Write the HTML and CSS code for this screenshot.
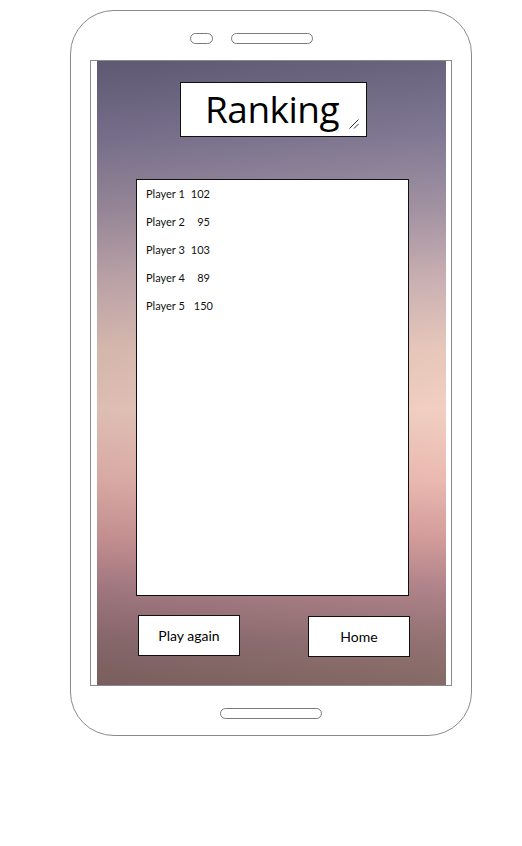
FILE: index.html
```html
<!DOCTYPE html>
<html>
<head>
<meta charset="utf-8">
<link rel="stylesheet" href="styles.css">
</head>
<body>
<div class="phone">
  <div class="speakers">
    <div class="pill small"></div>
    <div class="pill large"></div>
  </div>
  <div class="frame">
    <div class="screen">
      <div class="title">
        <span class="title-text">Ranking</span>
        <svg class="grip" width="10" height="10" viewBox="0 0 10 10">
          <line x1="0.5" y1="9.5" x2="9.5" y2="0.5" stroke="#333" stroke-width="1"/>
          <line x1="5" y1="9.5" x2="9.5" y2="5" stroke="#333" stroke-width="1"/>
        </svg>
      </div>
      <div class="list">
        <div class="row"><span class="name">Player 1</span><span class="score">102</span></div>
        <div class="row"><span class="name">Player 2</span><span class="score">95</span></div>
        <div class="row"><span class="name">Player 3</span><span class="score">103</span></div>
        <div class="row"><span class="name">Player 4</span><span class="score">89</span></div>
        <div class="row"><span class="name">Player 5</span><span class="score last">150</span></div>
      </div>
      <div class="buttons">
        <div class="btn">Play again</div>
        <div class="btn home">Home</div>
      </div>
    </div>
  </div>
  <div class="home-bar"></div>
</div>
</body>
</html>
```
FILE: styles.css
```css
html, body {
  margin: 0;
  padding: 0;
  background: #ffffff;
}
body {
  font-family: "Lato", "Noto Sans", sans-serif;
  color: #111;
}
.phone {
  box-sizing: border-box;
  margin: 10px 0 0 70px;
  width: 402px;
  height: 726px;
  border: 1px solid #8a8a8a;
  border-radius: 44px;
  display: flex;
  flex-direction: column;
}
.speakers {
  display: flex;
  gap: 18px;
  padding: 22px 0 0 119px;
  height: 11px;
}
.pill {
  box-sizing: border-box;
  height: 11px;
  border: 1px solid #7a7a7a;
  border-radius: 6px;
}
.pill.small { width: 23px; }
.pill.large { width: 82px; }
.frame {
  box-sizing: border-box;
  margin: 16px 0 0 19px;
  width: 362px;
  height: 626px;
  border: 1px solid #8a8a8a;
  padding: 0 5px 0 6px;
}
.screen {
  height: 100%;
  display: flex;
  flex-direction: column;
  background:
    linear-gradient(to right, rgba(50, 45, 70, 0.10), rgba(255, 255, 255, 0.04)),
    linear-gradient(to bottom,
      #635d78 0%,
      #7c7490 12%,
      #a08f9f 24%,
      #c8adb0 35%,
      #e6c5b8 46%,
      #f1cdbf 56%,
      #eab7ae 67%,
      #d39a98 76%,
      #aa7d84 85%,
      #8e6c6d 93%,
      #80645f 100%);
}
.title {
  position: relative;
  box-sizing: border-box;
  margin: 21px 0 0 83px;
  width: 187px;
  height: 55px;
  border: 1px solid #111;
  background: #fff;
  display: flex;
  align-items: center;
}
.title-text {
  font-family: "Open Sans", "Noto Sans", sans-serif;
  font-size: 37px;
  padding-left: 24px;
  letter-spacing: -0.5px;
  line-height: 1;
  margin-top: -2px;
  color: #000;
}
.grip {
  position: absolute;
  right: 7px;
  bottom: 7px;
}
.list {
  box-sizing: border-box;
  margin: 42px 0 0 39px;
  width: 273px;
  height: 417px;
  border: 1px solid #111;
  background: #fff;
  padding: 6px 0 0 9px;
  font-size: 11px;
}
.row {
  height: 28px;
  line-height: 16px;
  display: flex;
  white-space: nowrap;
}
.name {
  width: 40px;
  white-space: nowrap;
}
.score {
  width: 24px;
  text-align: right;
}
.score.last {
  width: 27px;
}
.buttons {
  display: flex;
  align-items: flex-start;
  gap: 68px;
  margin: 19px 0 0 41px;
}
.btn {
  box-sizing: border-box;
  width: 102px;
  height: 41px;
  border: 1px solid #111;
  background: #fff;
  display: flex;
  align-items: center;
  justify-content: center;
  font-size: 14px;
  color: #000;
}
.btn.home {
  margin-top: 1px;
}
.home-bar {
  box-sizing: border-box;
  margin: 22px 0 0 149px;
  width: 102px;
  height: 11px;
  border: 1px solid #7a7a7a;
  border-radius: 6px;
}
```
